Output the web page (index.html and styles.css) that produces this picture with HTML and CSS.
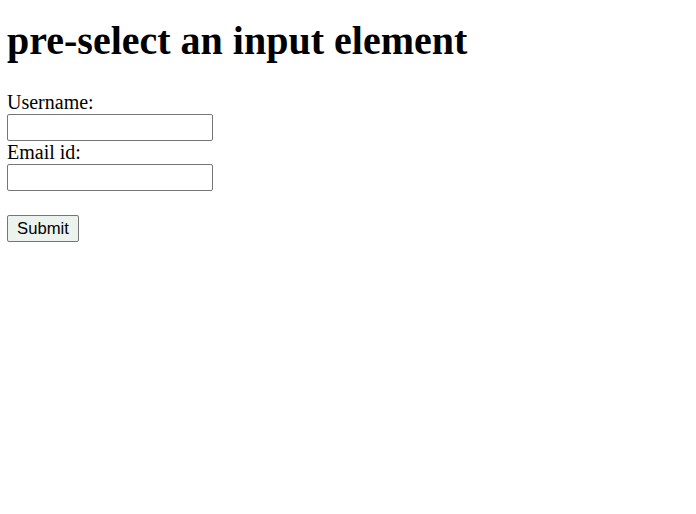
FILE: index.html
```html
<!DOCTYPE html>
<html>
<head>
<meta charset="utf-8">
<title>pre-select an input element</title>
<link rel="stylesheet" href="styles.css">
</head>
<body>
<h1 class="title">pre-select an input element</h1>
<form class="form">
  <label class="label" for="username">Username:</label>
  <input class="field" type="text" id="username" name="username">
  <label class="label" for="email">Email id:</label>
  <input class="field" type="text" id="email" name="email">
  <div class="spacer"></div>
  <button class="submit" type="submit">Submit</button>
</form>
</body>
</html>
```
FILE: styles.css
```css
html, body {
  margin: 0;
  padding: 0;
  background: #ffffff;
}
body {
  padding: 0 7px;
  font-family: "Liberation Serif", "Times New Roman", serif;
  font-size: 20px;
  color: #000000;
}
.title {
  margin: 0;
  padding-top: 18px;
  font-size: 40px;
  font-weight: bold;
  line-height: 46px;
  height: 46px;
}
.form {
  display: flex;
  flex-direction: column;
  align-items: flex-start;
  margin-top: 27px;
}
.label {
  display: block;
  height: 22px;
  line-height: 22px;
}
.field {
  box-sizing: border-box;
  width: 206px;
  height: 27px;
  margin: 1px 0 0;
  padding: 1px 3px;
  border: 1px solid #767676;
  border-radius: 2px;
  background: #ffffff;
  font: 16px "Liberation Sans", Arial, sans-serif;
}
.spacer {
  height: 23px;
}
.submit {
  box-sizing: border-box;
  width: 72px;
  height: 27px;
  margin: 1px 0 0;
  padding: 0;
  border: 1px solid #767676;
  border-radius: 2px;
  background: #ecf3ee;
  color: #000000;
  font: 16.67px "Liberation Sans", Arial, sans-serif;
}
```
